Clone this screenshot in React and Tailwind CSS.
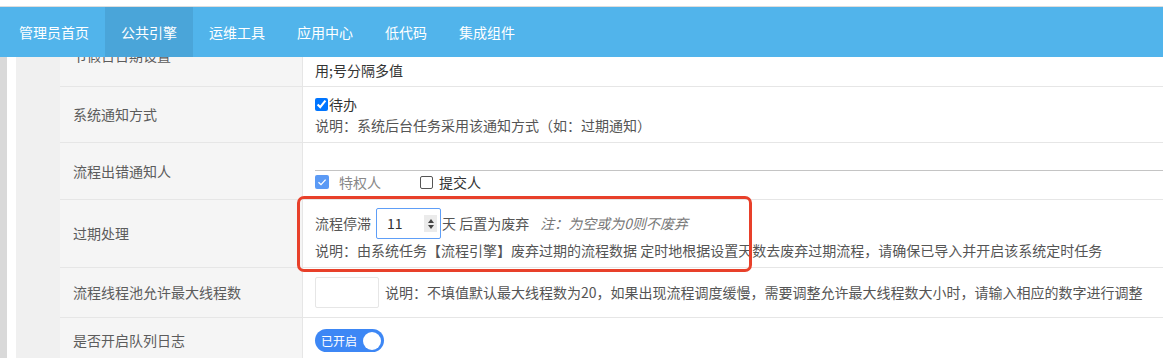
const navItems = ['管理员首页', '公共引擎', '运维工具', '应用中心', '低代码', '集成组件'];

const Label = ({ children }) => (
  <div className="w-[243px] shrink-0 bg-[#f5f5f5] border-r border-[#e6e6e6] flex items-center pl-[13px] text-[#5c5c5c]">
    {children}
  </div>
);

const Spinner = () => (
  <div className="w-[13px] h-[17px] bg-[#ebebeb] flex items-center justify-center">
    <svg width="8" height="12" viewBox="0 0 8 12">
      <path d="M4 1 L7 5 L1 5 Z" fill="#444" />
      <path d="M4 11 L7 7 L1 7 Z" fill="#444" />
    </svg>
  </div>
);

const App = () => {
  return (
    <div
      className="relative w-full h-[358px] overflow-hidden bg-white text-[14px] leading-[21px]"
      style={{ fontFamily: '"Noto Sans CJK SC", "Noto Sans", sans-serif' }}
    >
      <div className="h-[7px] bg-white border-b border-[#dddddd]" />

      <nav className="relative z-10 h-[50px] bg-[#51b4eb] flex pl-[3px]">
        {navItems.map((item, i) => (
          <div
            key={item}
            className={
              i === 1
                ? 'px-[16px] flex items-center text-white bg-[#4aa5d9]'
                : 'px-[16px] flex items-center text-white'
            }
          >
            {item}
          </div>
        ))}
      </nav>

      <div className="flex -mt-[33px] h-[400px]">
        <div className="w-[7px] shrink-0 bg-[#d9d9d9]" />
        <div className="w-[9px] shrink-0 bg-white" />
        <div className="w-[44px] shrink-0 bg-[#f0f0f0]" />

        <div className="flex-1 flex flex-col">
          {/* row 0, mostly hidden under the menu */}
          <div className="flex h-[63px] border-b border-[#e6e6e6]">
            <Label>节假日日期设置</Label>
            <div className="flex-1 pl-[12px] flex flex-col justify-end pb-[5px] text-[#333]">
              <div>用;号分隔多值</div>
            </div>
          </div>

          {/* row 1 */}
          <div className="flex h-[56px] border-b border-[#e6e6e6]">
            <Label>系统通知方式</Label>
            <div className="flex-1 pl-[12px] flex flex-col justify-center">
              <div className="flex items-center text-[#333]">
                <input type="checkbox" checked readOnly className="w-[13px] h-[13px] m-0" />
                <span className="ml-[1px]">待办</span>
              </div>
              <div className="text-[#555]">说明：系统后台任务采用该通知方式（如：过期通知）</div>
            </div>
          </div>

          {/* row 2 */}
          <div className="flex h-[57px] border-b border-[#e6e6e6]">
            <Label>流程出错通知人</Label>
            <div className="flex-1 pl-[12px] flex flex-col">
              <div className="h-[28px] border-b border-[#c4c4c4]" />
              <div className="h-[22px] flex items-center">
                <div className="w-[14px] h-[14px] rounded-[2px] bg-[#5b9af5] flex items-center justify-center">
                  <svg width="10" height="10" viewBox="0 0 10 10">
                    <path d="M1.5 5.2 L4 7.6 L8.6 2.6" fill="none" stroke="white" strokeWidth="1.3" />
                  </svg>
                </div>
                <span className="ml-[10px] text-[#888]">特权人</span>
                <div className="ml-[39px] w-[13px] h-[13px] rounded-[2px] border border-[#555] bg-white" />
                <span className="ml-[6px] text-[#333]">提交人</span>
              </div>
            </div>
          </div>

          {/* row 3 */}
          <div className="flex h-[68px] border-b border-[#e6e6e6]">
            <Label>过期处理</Label>
            <div className="flex-1 pl-[12px] pt-[8px] flex flex-col text-[#555]">
              <div className="flex items-center">
                <span>流程停滞</span>
                <div className="ml-[5px] w-[65px] h-[31px] border border-[#5e9ef7] rounded-[2px] bg-white flex items-center justify-between pl-[10px] pr-[3px]">
                  <span className="text-[#333]">11</span>
                  <Spinner />
                </div>
                <span className="ml-[1px]">天 后置为废弃</span>
                <span className="ml-[11px] italic text-[#777]">注：为空或为0则不废弃</span>
              </div>
              <div className="mt-[1px]">
                说明：由系统任务【流程引擎】废弃过期的流程数据 定时地根据设置天数去废弃过期流程，请确保已导入并开启该系统定时任务
              </div>
            </div>
          </div>

          {/* row 4 */}
          <div className="flex h-[50px] border-b border-[#e6e6e6]">
            <Label>流程线程池允许最大线程数</Label>
            <div className="flex-1 pl-[12px] flex items-center text-[#555]">
              <div className="w-[64px] h-[31px] border border-[#e6e6e6] rounded-[2px] bg-white" />
              <span className="ml-[6px]">
                说明：不填值默认最大线程数为20，如果出现流程调度缓慢，需要调整允许最大线程数大小时，请输入相应的数字进行调整
              </span>
            </div>
          </div>

          {/* row 5 */}
          <div className="flex h-[46px] border-b border-[#e6e6e6]">
            <Label>是否开启队列日志</Label>
            <div className="flex-1 pl-[12px] flex items-center">
              <div className="w-[69px] h-[23px] rounded-full bg-[#3d87f5] flex items-center justify-between pl-[6px] pr-[3px]">
                <span className="text-[12px] leading-[12px] text-white">已开启</span>
                <div className="w-[18px] h-[18px] rounded-full bg-white" />
              </div>
            </div>
          </div>
        </div>
      </div>

      {/* red annotation frame */}
      <div className="absolute left-[297px] top-[196px] w-[455px] h-[76px] border-[3px] border-[#e8402a] rounded-[7px] z-20 pointer-events-none" />
    </div>
  );
};

export default App;
